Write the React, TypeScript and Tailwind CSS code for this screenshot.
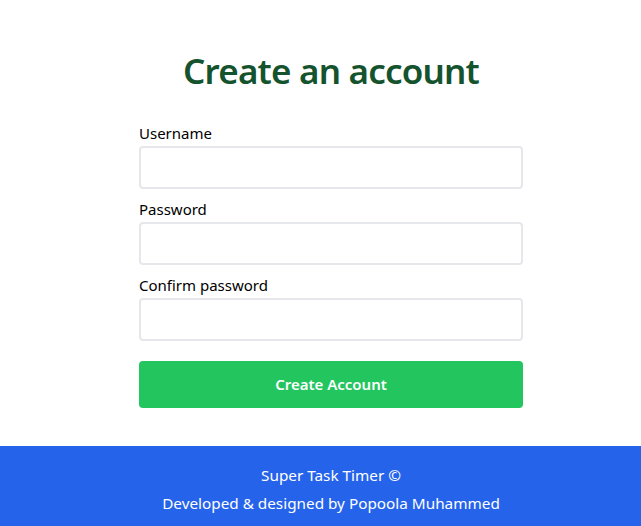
import React from "react";

export default function App() {
  return (
    <div
      className="min-h-screen flex flex-col bg-white overflow-x-hidden"
      style={{ fontFamily: '"Noto Sans", "Open Sans", sans-serif' }}
    >
      <main className="flex-1 flex flex-col items-center pt-[50px] pl-[21px]">
        <h1 className="text-[35px] leading-[42px] font-semibold tracking-[-0.8px] text-[#14532d]">
          Create an account
        </h1>
        <form className="w-[384px] mt-[29px] flex flex-col" onSubmit={(e) => e.preventDefault()}>
          <label className="text-[15px] leading-6 text-black">Username</label>
          <input className="mt-px h-[43px] rounded border-2 border-[#e5e7eb] outline-none px-3" />
          <label className="mt-[8px] text-[15px] leading-6 text-black">Password</label>
          <input type="password" className="mt-px h-[43px] rounded border-2 border-[#e5e7eb] outline-none px-3" />
          <label className="mt-[8px] text-[15px] leading-6 text-black">Confirm password</label>
          <input type="password" className="mt-px h-[43px] rounded border-2 border-[#e5e7eb] outline-none px-3" />
          <button className="mt-[20px] h-[47px] rounded bg-[#22c55e] text-white font-semibold text-[15px]">
            Create Account
          </button>
        </form>
      </main>
      <footer className="mt-[37px] h-[80px] bg-[#2563eb] text-white text-[15.3px] flex flex-col items-center justify-center leading-7 pl-[21px] pt-[5px]">
        <p>Super Task Timer ©</p>
        <p>Developed &amp; designed by Popoola Muhammed</p>
      </footer>
    </div>
  );
}
